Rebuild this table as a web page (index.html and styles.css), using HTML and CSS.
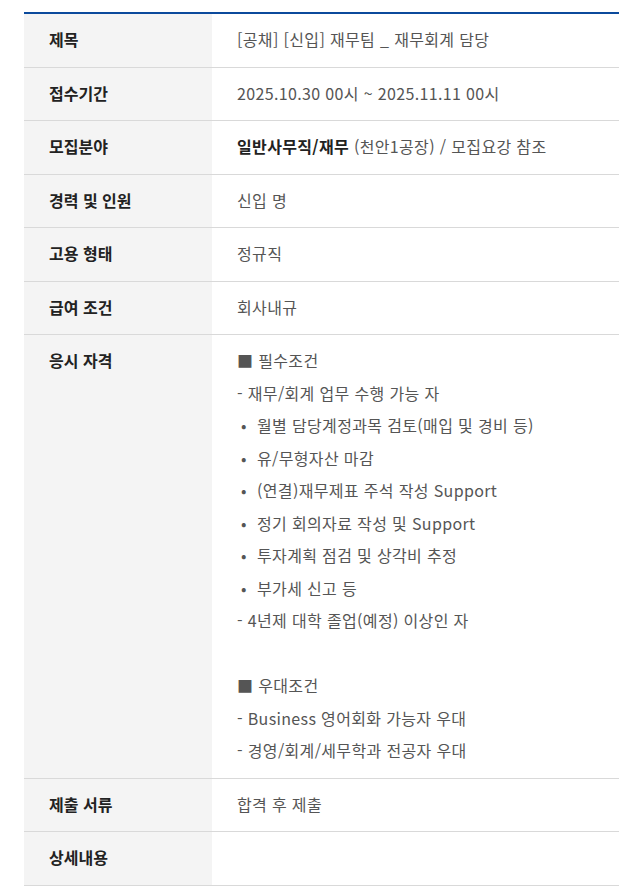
FILE: index.html
```html
<!DOCTYPE html>
<html lang="ko">
<head>
  <meta charset="UTF-8">
  <title>채용공고</title>
  <link rel="stylesheet" href="styles.css">
</head>
<body>

<table class="recruit-table">
  <tbody>
    <tr>
      <th>제목</th>
      <td>[공채] [신입] 재무팀 _ 재무회계 담당</td>
    </tr>
    <tr>
      <th>접수기간</th>
      <td>2025.10.30 00시 ~ 2025.11.11 00시</td>
    </tr>
    <tr>
      <th>모집분야</th>
      <td><strong>일반사무직/재무</strong> (천안1공장) / 모집요강 참조</td>
    </tr>
    <tr>
      <th>경력 및 인원</th>
      <td>신입 명</td>
    </tr>
    <tr>
      <th>고용 형태</th>
      <td>정규직</td>
    </tr>
    <tr>
      <th>급여 조건</th>
      <td>회사내규</td>
    </tr>
    <tr>
      <th>응시 자격</th>
      <td>
        <div class="line">■ 필수조건</div>
        <div class="line">- 재무/회계 업무 수행 가능 자</div>
        <div class="line dot"><span class="bullet">•</span>월별 담당계정과목 검토(매입 및 경비 등)</div>
        <div class="line dot"><span class="bullet">•</span>유/무형자산 마감</div>
        <div class="line dot"><span class="bullet">•</span>(연결)재무제표 주석 작성 Support</div>
        <div class="line dot"><span class="bullet">•</span>정기 회의자료 작성 및 Support</div>
        <div class="line dot"><span class="bullet">•</span>투자계획 점검 및 상각비 추정</div>
        <div class="line dot"><span class="bullet">•</span>부가세 신고 등</div>
        <div class="line">- 4년제 대학 졸업(예정) 이상인 자</div>
        <div class="line">&nbsp;</div>
        <div class="line">■ 우대조건</div>
        <div class="line">- Business 영어회화 가능자 우대</div>
        <div class="line">- 경영/회계/세무학과 전공자 우대</div>
      </td>
    </tr>
    <tr>
      <th>제출 서류</th>
      <td>합격 후 제출</td>
    </tr>
    <tr>
      <th>상세내용</th>
      <td></td>
    </tr>
  </tbody>
</table>

</body>
</html>
```

FILE: styles.css
```css
body {
  margin: 0;
  font-family: "Noto Sans CJK KR", "Noto Sans", sans-serif;
  font-size: 16px;
  background: #fff;
}
.recruit-table {
  border-collapse: collapse;
  width: calc(100% - 24px);
  margin: 12px 0 0 24px;
  border-top: 2px solid #0b4a9c;
}
.recruit-table th,
.recruit-table td {
  padding: 9px 0 11px 25px;
  line-height: 32.5px;
  text-align: left;
  vertical-align: top;
  border-bottom: 1px solid #d9d9d9;
}
.recruit-table th {
  width: 163px;
  background-color: #f4f4f4;
  color: #222;
  font-weight: 700;
}
.recruit-table td {
  color: #555;
  font-weight: 400;
  letter-spacing: 0.35px;
}
.recruit-table td strong {
  color: #222;
  font-weight: 700;
}
.line {
  line-height: 32.5px;
}
.dot {
  padding-left: 4px;
}
.bullet {
  display: inline-block;
  width: 16px;
}
```
